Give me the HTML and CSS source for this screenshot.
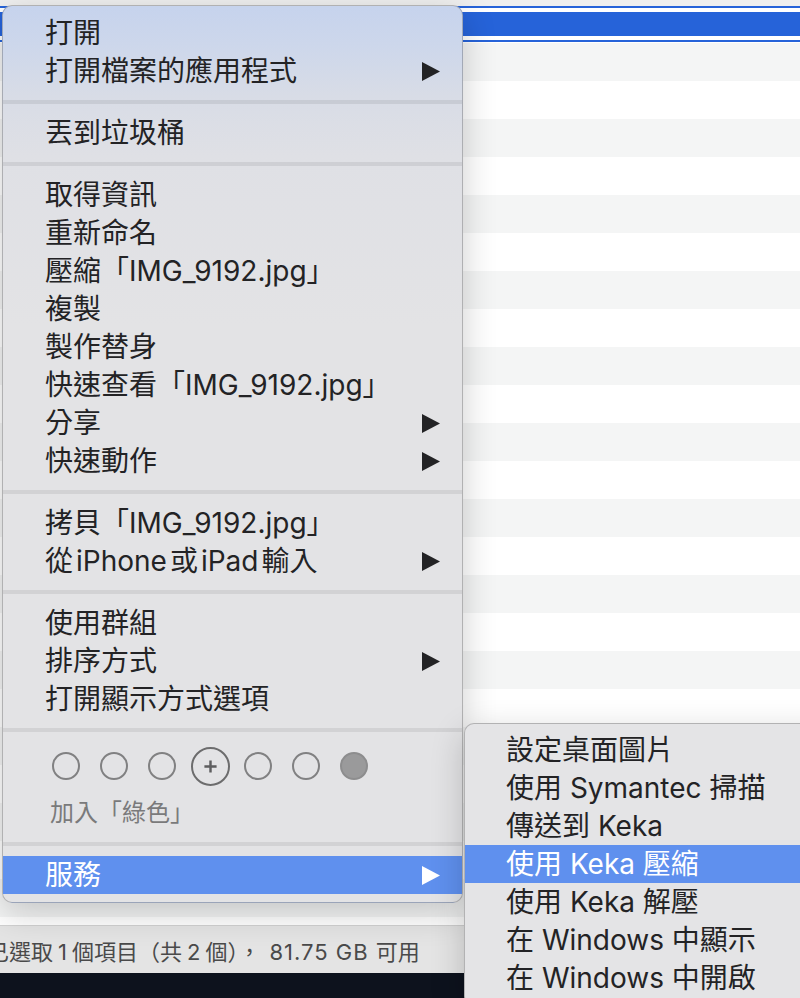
FILE: index.html
```html
<!DOCTYPE html>
<html lang="zh-Hant">
<head>
<meta charset="utf-8">
<title>Finder 選單</title>
<link rel="stylesheet" href="styles.css">
</head>
<body>
<div class="finder">
  <div class="top-strip"></div>
  <div class="focus-line"></div>
  <div class="focus-gap"></div>
  <div class="selected-row"></div>
  <div class="focus-gap"></div>
  <div class="focus-line"></div>
  <div class="white-line"></div>
  <div class="rows"></div>
  <div class="statusbar">
    <span class="status-text">已選取<span class="num">1</span>個項目（共<span class="num">2</span>個），<span class="num wide">81.75 GB</span>可用</span>
  </div>
  <div class="dock"></div>
</div>

<div class="menu main-menu">
  <div class="item"><span>打開</span></div>
  <div class="item"><span>打開檔案的應用程式</span><svg class="arrow" viewBox="0 0 18 19"><polygon points="0,0 18,9.5 0,19"/></svg></div>
  <div class="sep"></div>
  <div class="item"><span>丟到垃圾桶</span></div>
  <div class="sep"></div>
  <div class="item"><span>取得資訊</span></div>
  <div class="item"><span>重新命名</span></div>
  <div class="item"><span>壓縮「IMG_9192.jpg」</span></div>
  <div class="item"><span>複製</span></div>
  <div class="item"><span>製作替身</span></div>
  <div class="item"><span>快速查看「IMG_9192.jpg」</span></div>
  <div class="item"><span>分享</span><svg class="arrow" viewBox="0 0 18 19"><polygon points="0,0 18,9.5 0,19"/></svg></div>
  <div class="item"><span>快速動作</span><svg class="arrow" viewBox="0 0 18 19"><polygon points="0,0 18,9.5 0,19"/></svg></div>
  <div class="sep"></div>
  <div class="item"><span>拷貝「IMG_9192.jpg」</span></div>
  <div class="item"><span>從<span class="lat">iPhone</span>或<span class="lat">iPad</span>輸入</span><svg class="arrow" viewBox="0 0 18 19"><polygon points="0,0 18,9.5 0,19"/></svg></div>
  <div class="sep"></div>
  <div class="item"><span>使用群組</span></div>
  <div class="item"><span>排序方式</span><svg class="arrow" viewBox="0 0 18 19"><polygon points="0,0 18,9.5 0,19"/></svg></div>
  <div class="item"><span>打開顯示方式選項</span></div>
  <div class="sep"></div>
  <div class="tag-block">
    <div class="tags">
      <span class="dot"></span>
      <span class="dot"></span>
      <span class="dot"></span>
      <span class="dot big"><svg viewBox="0 0 16 16"><path d="M8 1.5v13M1.5 8h13"/></svg></span>
      <span class="dot"></span>
      <span class="dot"></span>
      <span class="dot filled"></span>
    </div>
    <div class="tag-label">加入「綠色」</div>
  </div>
  <div class="sep"></div>
  <div class="item active"><span>服務</span><svg class="arrow" viewBox="0 0 18 19"><polygon points="0,0 18,9.5 0,19"/></svg></div>
</div>

<div class="menu sub-menu">
  <div class="item"><span>設定桌面圖片</span></div>
  <div class="item"><span>使用 Symantec 掃描</span></div>
  <div class="item"><span>傳送到 Keka</span></div>
  <div class="item active"><span>使用 Keka 壓縮</span></div>
  <div class="item"><span>使用 Keka 解壓</span></div>
  <div class="item"><span>在 Windows 中顯示</span></div>
  <div class="item"><span>在 Windows 中開啟</span></div>
</div>
</body>
</html>
```

FILE: styles.css
```css
html, body {
  margin: 0;
  padding: 0;
}

body {
  width: 800px;
  height: 998px;
  overflow: hidden;
  position: relative;
  background: #ffffff;
  font-family: "Inter", "Noto Sans CJK TC", sans-serif;
  color: #232325;
}

.finder {
  display: flex;
  flex-direction: column;
  height: 998px;
}

.top-strip {
  height: 6px;
  background: #efefef;
}

.focus-line {
  height: 2px;
  background: #2663d9;
}

.focus-gap {
  height: 4px;
  background: #ffffff;
}

.selected-row {
  height: 24px;
  background: #2663d9;
}

.white-line {
  height: 1px;
  background: #ffffff;
}

.rows {
  height: 882px;
  background: repeating-linear-gradient(180deg, #f4f5f5 0px, #f4f5f5 38px, #ffffff 38px, #ffffff 76px);
}

.statusbar {
  height: 47px;
  border-top: 1px solid #d2d2d2;
  background: #e4e4e4;
  display: flex;
  align-items: center;
  font-size: 22px;
  color: #4a4a4a;
  white-space: nowrap;
}

.status-text {
  margin-left: -13px;
  padding-top: 1px;
}

.status-text .num {
  margin: 0 5px;
}

.status-text .num.wide {
  margin: 0 7px 0 9px;
  letter-spacing: 1px;
}

.dock {
  flex: 1;
  background: #0d121d;
}

/* menus */
.menu {
  position: absolute;
  box-sizing: border-box;
  border: 1px solid rgba(0, 0, 0, 0.22);
  border-radius: 10px;
  padding: 8px 0;
  font-size: 28px;
  box-shadow: 0 10px 34px rgba(0, 0, 0, 0.2);
}

.main-menu {
  left: 2px;
  top: 5px;
  width: 461px;
  background: linear-gradient(180deg, #c6d3ed 0px, #cdd7eb 40px, #d8dce6 90px, #dfe0e5 150px, #e3e3e5 320px, #e3e3e5 100%);
}

.sub-menu {
  left: 464px;
  top: 723px;
  width: 380px;
  padding-top: 7px;
  background: #e4e4e6;
}

.item {
  height: 38px;
  display: flex;
  align-items: center;
  justify-content: space-between;
  padding: 0 22px 0 42px;
  white-space: nowrap;
  line-height: 38px;
}

.sub-menu .item {
  padding-left: 41px;
}

.item .lat {
  margin: 0 3px;
}

.item.active {
  background: #5f90ee;
  color: #ffffff;
}

.arrow {
  width: 18px;
  height: 19px;
  fill: currentColor;
  flex: none;
}

.sep {
  height: 4px;
  margin: 10px 0;
  background: rgba(0, 0, 0, 0.075);
}

.tag-block {
  height: 90px;
  box-sizing: border-box;
  padding-top: 4px;
}

.tags {
  display: grid;
  grid-template-columns: repeat(7, 48px);
  height: 40px;
  align-items: center;
  justify-items: center;
  padding-left: 39px;
}

.dot {
  width: 28px;
  height: 28px;
  box-sizing: border-box;
  border: 2px solid #818182;
  border-radius: 50%;
  display: block;
}

.dot.big {
  width: 39px;
  height: 39px;
  border-color: #6c6c6d;
  display: flex;
  align-items: center;
  justify-content: center;
}

.dot.big svg {
  width: 15px;
  height: 15px;
  stroke: #5e5e5f;
  stroke-width: 2.6;
  fill: none;
}

.dot.filled {
  background: #9a9a9b;
  border-color: #8d8d8e;
}

.tag-label {
  margin-top: 12px;
  height: 30px;
  line-height: 30px;
  padding-left: 47px;
  font-size: 24px;
  color: #7a7a7b;
  white-space: nowrap;
}
```
